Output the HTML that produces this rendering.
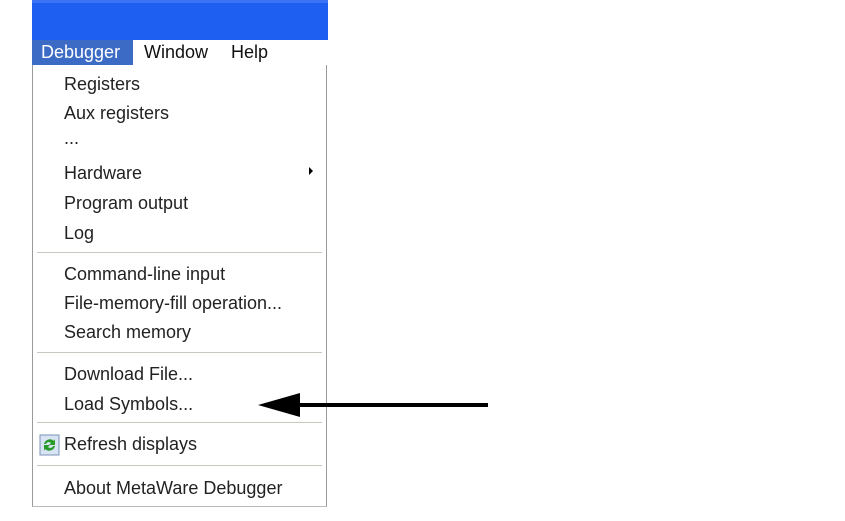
<!DOCTYPE html><html><head><style>
body{margin:0;width:845px;height:521px;background:#fff;position:relative;overflow:hidden;font-family:"Liberation Sans",sans-serif;}
.bar{position:absolute;left:32px;top:0;width:296px;height:40px;background:#1e5ef0;border-top:3px solid #3a74f5;box-sizing:border-box}
.mb{position:absolute;top:40px;left:32px;width:296px;height:25px;background:#fff}
.mb span{position:absolute;top:2px;font-size:18px;color:#111}
.menu{position:absolute;left:32px;top:65px;width:295px;height:442px;border-left:1px solid #9a9a9a;border-right:1px solid #9a9a9a;border-bottom:1px solid #bbb;box-sizing:border-box;background:#fff}
.it{position:absolute;left:64px;font-size:18px;color:#222;line-height:20px}
.sep{position:absolute;left:37px;width:285px;height:1px;background:#c8c8c0}
</style></head><body>
<div class="bar"></div>
<div class="mb"><span style="left:0;top:0;width:101px;height:25px;background:#3b6bc4;"></span><span style="left:9px;color:#fff">Debugger</span><span style="left:112px">Window</span><span style="left:199px">Help</span></div>
<div class="menu"></div>
<div class="it" style="top:74px">Registers</div>
<div class="it" style="top:103px">Aux registers</div>
<div class="it" style="top:128px">...</div>
<div class="it" style="top:163px">Hardware</div>
<div style="position:absolute;left:309px;top:167px;width:0;height:0;border-left:4px solid #000;border-top:4px solid transparent;border-bottom:4px solid transparent"></div>
<div class="it" style="top:193px">Program output</div>
<div class="it" style="top:223px">Log</div>
<div class="sep" style="top:252px"></div>
<div class="it" style="top:264px">Command-line input</div>
<div class="it" style="top:293px">File-memory-fill operation...</div>
<div class="it" style="top:322px">Search memory</div>
<div class="sep" style="top:352px"></div>
<div class="it" style="top:364px">Download File...</div>
<div class="it" style="top:394px">Load Symbols...</div>
<div class="sep" style="top:422px"></div>
<svg style="position:absolute;left:39px;top:434px" width="22" height="22"><rect x="1" y="1" width="19" height="20" fill="#d8e4f4" stroke="#7a90b8"/><path d="M5 10a6 6 0 0 1 10-3l1-2v6h-6l2-2a3 3 0 0 0-5 1z" fill="#2a9a2a"/><path d="M16 12a6 6 0 0 1-10 3l-1 2v-6h6l-2 2a3 3 0 0 0 5-1z" fill="#2a9a2a"/></svg>
<div class="it" style="top:434px">Refresh displays</div>
<div class="sep" style="top:465px"></div>
<div class="it" style="top:478px">About MetaWare Debugger</div>
<svg style="position:absolute;left:255px;top:390px" width="235" height="30"><line x1="40" y1="15" x2="233" y2="15" stroke="#000" stroke-width="4"/><polygon points="3,15 45,3 45,27" fill="#000"/></svg>
</body></html>
